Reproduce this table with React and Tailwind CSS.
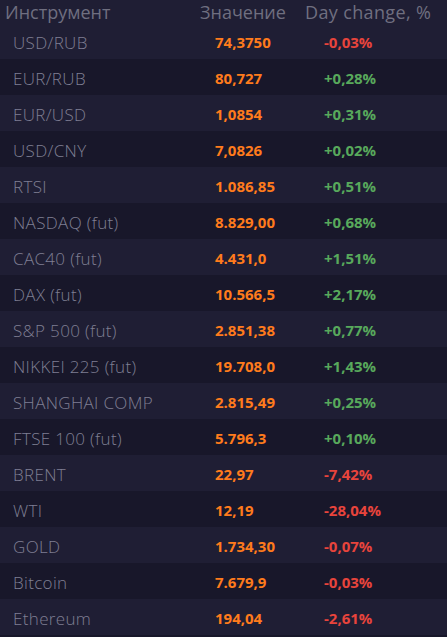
const rows = [
    ['USD/RUB', '74,3750', '-0,03%'],
    ['EUR/RUB', '80,727', '+0,28%'],
    ['EUR/USD', '1,0854', '+0,31%'],
    ['USD/CNY', '7,0826', '+0,02%'],
    ['RTSI', '1.086,85', '+0,51%'],
    ['NASDAQ (fut)', '8.829,00', '+0,68%'],
    ['CAC40 (fut)', '4.431,0', '+1,51%'],
    ['DAX (fut)', '10.566,5', '+2,17%'],
    ['S&P 500 (fut)', '2.851,38', '+0,77%'],
    ['NIKKEI 225 (fut)', '19.708,0', '+1,43%'],
    ['SHANGHAI COMP', '2.815,49', '+0,25%'],
    ['FTSE 100 (fut)', '5.796,3', '+0,10%'],
    ['BRENT', '22,97', '-7,42%'],
    ['WTI', '12,19', '-28,04%'],
    ['GOLD', '1.734,30', '-0,07%'],
    ['Bitcoin', '7.679,9', '-0,03%'],
    ['Ethereum', '194,04', '-2,61%'],
];

export default function App() {
    return (
        <div className="w-[447px] h-[637px] bg-[#18172a] font-['Open_Sans',sans-serif]">
            {/* Header */}
            <div className="flex items-center h-[23px] bg-[#1f1e34] text-[18px] text-[#6f6f80] leading-none">
                <div className="pl-[5px] w-[200px]">Инструмент</div>
                <div className="w-[105px]">Значение</div>
                <div className="tracking-[0.02em]">Day change, %</div>
            </div>

            {rows.map(([name, value, change], i) => (
                <div
                    key={name}
                    className={`flex items-center h-[36px] pt-[3px] ${i % 2 === 0 ? 'bg-[#1f1e34]' : 'bg-[#18172a]'}`}
                >
                    <div className="pl-[13px] w-[215px] text-[17px] font-light tracking-[0.02em] text-[#7f7f93]">{name}</div>
                    <div className="w-[109px] text-[15px] font-bold text-[#ff7b1c]">{value}</div>
                    <div className={`text-[15px] font-bold ${change.startsWith('-') ? 'text-[#e8443c]' : 'text-[#58a95c]'}`}>
                        {change}
                    </div>
                </div>
            ))}
        </div>
    );
}
